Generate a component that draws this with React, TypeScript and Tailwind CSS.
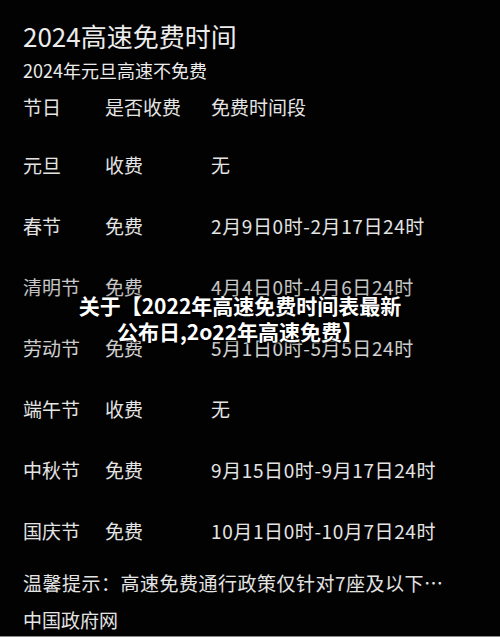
import React from "react";

const rows: [string, string, string][] = [
  ["元旦", "收费", "无"],
  ["春节", "免费", "2月9日0时-2月17日24时"],
  ["清明节", "免费", "4月4日0时-4月6日24时"],
  ["劳动节", "免费", "5月1日0时-5月5日24时"],
  ["端午节", "收费", "无"],
  ["中秋节", "免费", "9月15日0时-9月17日24时"],
  ["国庆节", "免费", "10月1日0时-10月7日24时"],
];

export default function App() {
  return (
    <div
      className="relative w-[500px] h-[637px] overflow-hidden bg-[#020202] text-[#e4e4e4] border-b border-[#8a8a8a]"
      style={{ fontFamily: '"Noto Sans CJK SC", "Noto Sans", sans-serif' }}
    >
      <div className="flex flex-col pl-[23px] pt-[17px]">
        <div className="h-[38px] leading-[38px] text-[26px] text-[#ececec]">2024高速免费时间</div>
        <div className="h-[30px] leading-[30px] text-[18px] text-[#ececec]">2024年元旦高速不免费</div>
        <div className="flex h-[44px] items-center text-[19px]">
          <div className="w-[82px]">节日</div>
          <div className="w-[106px]">是否收费</div>
          <div>免费时间段</div>
        </div>
        <div className="flex flex-col pt-[6px]">
          {rows.map((r) => (
            <div key={r[0]} className="flex h-[61px] items-center text-[19px]">
              <div className="w-[82px]">{r[0]}</div>
              <div className="w-[106px]">{r[1]}</div>
              <div className="tracking-[0.6px]">{r[2]}</div>
            </div>
          ))}
        </div>
        <div className="h-[42px] leading-[42px] text-[19px] tracking-[0.5px]">温馨提示：高速免费通行政策仅针对7座及以下…</div>
        <div className="h-[32px] leading-[32px] text-[19px]">中国政府网</div>
      </div>

      <div className="absolute left-0 top-[255px] w-[500px] h-[115px] bg-gradient-to-b from-transparent via-black/25 to-transparent" />

      <div
        className="absolute left-0 top-[292px] w-[480px] text-center text-white font-bold text-[21px] leading-[26px]"
        style={{ textShadow: "0 0 3px #000, 0 0 2px #000, 1px 1px 2px #000" }}
      >
        <div>关于【2022年高速免费时间表最新</div>
        <div>公布日,2o22年高速免费】</div>
      </div>
    </div>
  );
}
